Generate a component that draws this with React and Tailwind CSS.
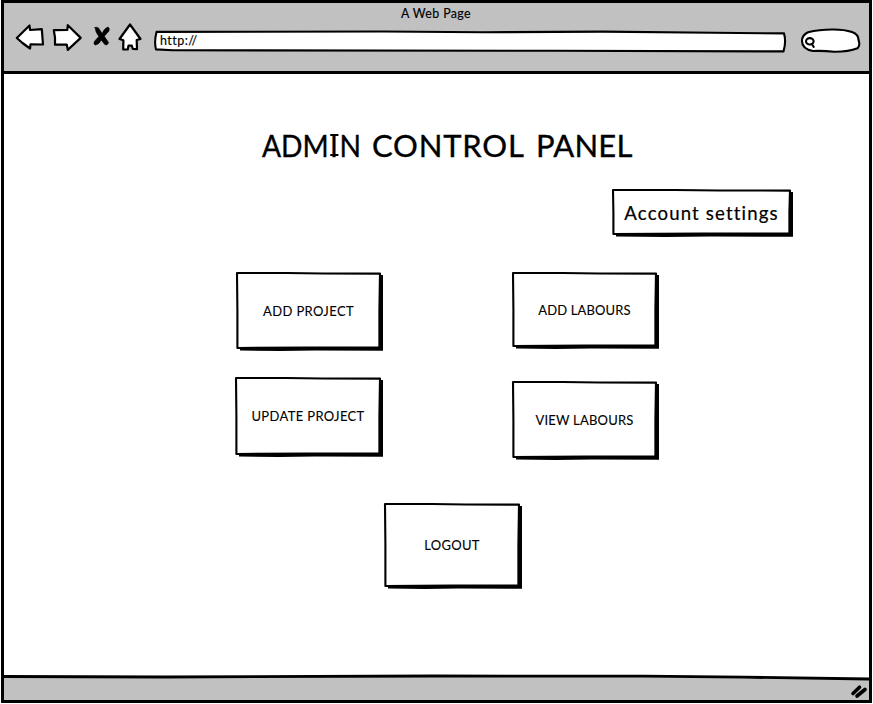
import React from "react";

function SketchButton({ w, h, className, textClass, children }) {
  return (
    <button type="button" className={`relative flex shrink-0 items-center justify-center ${className}`}>
      <svg className="absolute left-0 top-0 overflow-visible" width={w} height={h} aria-hidden="true">
        <path d={`M4 3 H${w + 2} V${h + 1.8} L${w * 0.55} ${h + 1.4} L${w * 0.3} ${h + 2} L4 ${h + 1.6} Z`} fill="#000" />
        <path
          d={`M1 1 L${w * 0.35} 1 L${w * 0.6} 1.5 L${w - 1} 1.6 L${w - 1.6} ${h * 0.5} L${w - 1.6} ${h - 1.6} L${w * 0.5} ${h - 1.4} L1.4 ${h - 1} L1.4 ${h * 0.5} Z`}
          fill="#fff"
          stroke="#000"
          strokeWidth="2.1"
          strokeLinejoin="round"
        />
      </svg>
      <span className={`relative whitespace-nowrap leading-none ${textClass}`}>{children}</span>
    </button>
  );
}

/* Capital I with the short top and bottom bars of a hand-lettered face. */
function BarredI({ className, barClass }) {
  return (
    <span className={`relative inline-block ${className}`}>
      I
      <span aria-hidden="true" className={`absolute border-black ${barClass}`} />
    </span>
  );
}

function NavIcons() {
  return (
    <svg className="block shrink-0" width="130" height="34" viewBox="14 21.5 130 34" fill="#fff" stroke="#000" strokeWidth="2.2" strokeLinejoin="round" strokeLinecap="round" aria-label="Navigation">
      <path d="M16.8 37.5 L29.5 25 L30 29.5 L41.8 28.6 L43 44 L30.5 43.8 L30 48 L22.5 42.5 Z" />
      <path d="M53.8 29.7 L67.3 29.5 L67.8 24.7 L80.7 37.4 L67.8 49.4 L66.7 44 L55 44.2 L55 37 Z" />
      <g fill="#000" strokeWidth="0.6">
        <path d="M95 27 Q98.5 25.8 99.8 29.5 L102.2 33 Q103.8 28.5 107.8 26.6 Q110 27 109 30.5 L104.3 35.7 Q106.5 39 108.6 42 Q107.5 45.6 104.8 44 L101.2 39.5 Q99.3 43.8 95.3 44.6 Q93 44 94.5 40.8 L98.8 36 Q95.3 31.5 95 27 Z" />
      </g>
      <path d="M130 24 L140.5 38.5 L136.7 39.5 L137 48.7 L132.8 48.5 L131.8 45.2 L128.5 45.2 L127.7 49 L123.2 49 L123.4 39.7 L119.5 38.5 Z" />
    </svg>
  );
}

function AddressBar() {
  return (
    <div className="relative ml-[9px] mt-[5px] flex h-[24px] w-[634px] items-center pl-[7px]">
      <svg className="absolute inset-0" width="634" height="24" aria-hidden="true">
        <path d="M3.5 1.9 L230 1.5 L330 2.3 L450 1.6 L560 2.8 L631 3.4 Q633.4 12 630.5 21.4 L400 20.8 L20 20.2 L3 19.4 Q1 12 3.5 1.9 Z" fill="#fff" stroke="#000" strokeWidth="2.1" strokeLinejoin="round" />
      </svg>
      <span className="relative whitespace-nowrap text-[12.5px] leading-none tracking-[0.45px] [-webkit-text-stroke:0.15px_black]">http://</span>
    </div>
  );
}

function SearchPill() {
  return (
    <svg className="ml-[13px] mt-[3px] block shrink-0" width="62" height="28" viewBox="800 27 62 28" fill="#fff" stroke="#000" strokeLinejoin="round" strokeLinecap="round" aria-label="Search">
      <path d="M808 32.3 Q819 29.5 832 29.5 Q844 29.3 852 32 Q858.6 34.5 858.5 40 Q860.5 45 857.5 48.3 Q848 52 834 51.8 Q824 50.6 813 51 Q802 49 802 41 Q802 35 808 32.3 Z" strokeWidth="2.1" />
      <ellipse cx="809.8" cy="41.3" rx="3.8" ry="3.2" strokeWidth="2.1" />
      <path d="M811.8 44 L813.7 46.8" strokeWidth="2.1" />
    </svg>
  );
}

export default function App() {
  return (
    <div className="h-[704px] w-[873px] overflow-hidden bg-white pl-px font-['Lato','Open_Sans',sans-serif] text-black">
      <div className="flex h-[703px] w-[871px] flex-col border-[3px] border-black">
        <header className="flex h-[71px] shrink-0 flex-col border-b-[3px] border-black bg-[#c1c1c1]">
          <div className="flex h-[16px] items-center justify-center pr-px pt-[6px] text-[12.4px] leading-none tracking-[0.4px] [-webkit-text-stroke:0.15px_black]">A Web Page</div>
          <div className="flex h-[40px] items-center pl-[10px]">
            <NavIcons />
            <AddressBar />
            <SearchPill />
          </div>
        </header>

        <main className="flex min-h-0 flex-1 flex-col bg-white">
          <h1 className="ml-[258px] mt-[55px] flex h-[32px] whitespace-pre text-[31px] leading-[32px] [-webkit-text-stroke:0.35px_black]">
            <span className="w-[110px] shrink-0 origin-left scale-x-[0.91]">
              ADM<BarredI className="mx-[1.5px]" barClass="bottom-[5px] left-0 h-[22px] w-[9px] border-y-[2.4px]" />N{" "}
            </span>
            <span className="w-[165px] shrink-0 tracking-[0.8px]">CONTROL </span>
            <span className="-ml-px tracking-[0.2px]">PANEL</span>
          </h1>
          <SketchButton w={179} h={46} className="ml-[608px] mt-[28px] h-[46px] w-[179px]" textClass="top-px text-[18.6px] tracking-[1.15px] [-webkit-text-stroke:0.2px_black]">Account settings</SketchButton>
          <div className="ml-[231px] mt-[37px] flex h-[187px] gap-[131px]">
            <div className="flex flex-col gap-[28px]">
              <SketchButton w={145} h={77} className="ml-px h-[77px] w-[145px] pt-px" textClass="text-[13px] tracking-[0.38px] [-webkit-text-stroke:0.1px_black]">ADD PROJECT</SketchButton>
              <SketchButton w={146} h={78} className="h-[78px] w-[146px]" textClass="text-[13px] tracking-[0.35px] [-webkit-text-stroke:0.1px_black]">UPDATE PROJECT</SketchButton>
            </div>
            <div className="flex flex-col gap-[34px]">
              <SketchButton w={145} h={75} className="h-[75px] w-[145px] pt-[2px]" textClass="text-[13px] tracking-[0.12px] [-webkit-text-stroke:0.1px_black]">ADD LABOURS</SketchButton>
              <SketchButton w={145} h={77} className="h-[77px] w-[145px] pt-[2px]" textClass="text-[13px] tracking-[0.2px] [-webkit-text-stroke:0.1px_black]">VIEW LABOURS</SketchButton>
            </div>
          </div>
          <SketchButton w={136} h={84} className="ml-[380px] mt-[44px] h-[84px] w-[136px]" textClass="text-[13px] tracking-[0.25px] [-webkit-text-stroke:0.1px_black]">LOGOUT</SketchButton>
        </main>

        <footer className="flex h-[26px] shrink-0">
          <svg className="block" width="865" height="26" aria-hidden="true">
            <path d="M0 2.5 L160 3 L430 2 L640 2.2 L865 5 V26 H0 Z" fill="#c1c1c1" />
            <path d="M0 2.5 L160 3 L430 2 L640 2.2 L740 3.2 L865 5" fill="none" stroke="#000" strokeWidth="2.8" />
            <g stroke="#000" strokeWidth="3.6" strokeLinecap="round">
              <path d="M849 19.5 L855.5 13.2" />
              <path d="M853 22 L861 15.5" />
            </g>
          </svg>
        </footer>
      </div>
    </div>
  );
}
